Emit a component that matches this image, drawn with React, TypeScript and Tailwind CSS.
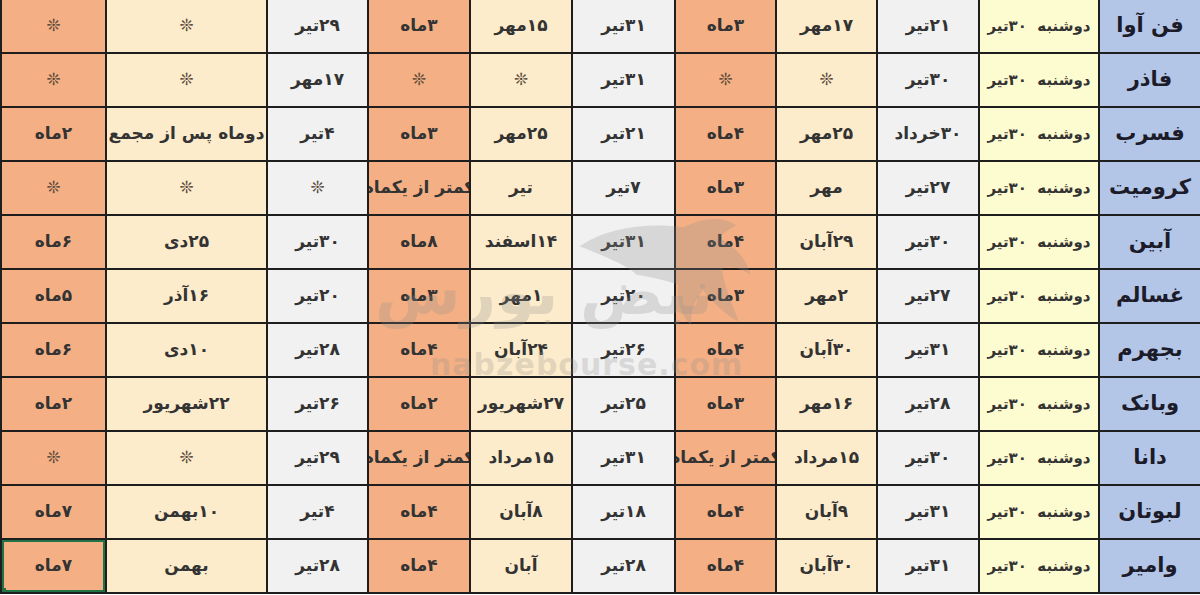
import React from 'react';

const STAR = '❊';
const DATE = 'دوشنبه  ۳۰تیر';

// rows, listed right-to-left as they read
const rows: string[][] = [
  ['فن آوا', DATE, '۲۱تیر', '۱۷مهر', '۳ماه', '۳۱تیر', '۱۵مهر', '۳ماه', '۲۹تیر', STAR, STAR],
  ['فاذر', DATE, '۳۰تیر', STAR, STAR, '۳۱تیر', STAR, STAR, '۱۷مهر', STAR, STAR],
  ['فسرب', DATE, '۳۰خرداد', '۲۵مهر', '۴ماه', '۲۱تیر', '۲۵مهر', '۳ماه', '۴تیر', 'دوماه پس از مجمع', '۲ماه'],
  ['کرومیت', DATE, '۲۷تیر', 'مهر', '۳ماه', '۷تیر', 'تیر', 'کمتر از یکماه', STAR, STAR, STAR],
  ['آبین', DATE, '۳۰تیر', '۲۹آبان', '۴ماه', '۳۱تیر', '۱۴اسفند', '۸ماه', '۳۰تیر', '۲۵دی', '۶ماه'],
  ['غسالم', DATE, '۲۷تیر', '۲مهر', '۳ماه', '۲۰تیر', '۱مهر', '۳ماه', '۲۰تیر', '۱۶آذر', '۵ماه'],
  ['بجهرم', DATE, '۳۱تیر', '۳۰آبان', '۴ماه', '۲۶تیر', '۲۴آبان', '۴ماه', '۲۸تیر', '۱۰دی', '۶ماه'],
  ['وبانک', DATE, '۲۸تیر', '۱۶مهر', '۳ماه', '۲۵تیر', '۲۷شهریور', '۲ماه', '۲۶تیر', '۲۲شهریور', '۲ماه'],
  ['دانا', DATE, '۳۰تیر', '۱۵مرداد', 'کمتر از یکماه', '۳۱تیر', '۱۵مرداد', 'کمتر از یکماه', '۲۹تیر', STAR, STAR],
  ['لبوتان', DATE, '۳۱تیر', '۹آبان', '۴ماه', '۱۸تیر', '۸آبان', '۴ماه', '۴تیر', '۱۰بهمن', '۷ماه'],
  ['وامیر', DATE, '۳۱تیر', '۳۰آبان', '۴ماه', '۲۸تیر', 'آبان', '۴ماه', '۲۸تیر', 'بهمن', '۷ماه'],
];

const colBg = [
  'bg-[#b4c6e7]',
  'bg-[#fdfbd0]',
  'bg-[#f1f1f1]',
  'bg-[#fdeccb]',
  'bg-[#f4b084]',
  'bg-[#f1f1f1]',
  'bg-[#fdeccb]',
  'bg-[#f4b084]',
  'bg-[#f1f1f1]',
  'bg-[#fdeccb]',
  'bg-[#f4b084]',
];

function Cell({ text, col, selected }: { text: string; col: number; selected?: boolean }) {
  const isStar = text === STAR;
  let cls = 'text-[17px] font-bold text-[#333333]';
  if (col === 0) cls = 'text-[21px] font-bold text-[#1b1b2a]';
  else if (col === 1) cls = 'text-[15px] font-bold text-[#333333]';
  else if (isStar) cls = 'text-[17px] text-[#5a4a3a]';
  return (
    <div
      className={`relative h-[54px] border-l-2 border-b-2 border-[#1e1e1e] flex items-center justify-center overflow-hidden whitespace-pre ${colBg[col]}`}
    >
      <span className={cls}>{text}</span>
      {selected && (
        <>
          <div className="absolute inset-0 border-2 border-[#217346]" />
          <div className="absolute -left-[2px] -bottom-[2px] w-[6px] h-[6px] bg-[#217346]" />
        </>
      )}
    </div>
  );
}

function Watermark() {
  return (
    <div className="pointer-events-none absolute left-[370px] top-[200px] w-[400px] h-[190px]">
      {/* bull */}
      <svg className="absolute left-[200px] top-[5px]" width="190" height="130" viewBox="0 0 200 130">
        <path
          d="M10 40 C40 20 80 15 120 20 C140 10 160 8 175 18 C168 22 160 26 158 32 C170 38 185 50 190 70 C178 62 168 60 160 64 C162 80 170 100 178 120 C165 112 150 100 140 86 C132 96 126 108 128 124 C116 112 112 96 114 80 C100 76 84 72 70 70 C60 60 40 52 10 40 Z"
          fill="#8a8a8a"
          opacity="0.25"
        />
      </svg>
      <div
        dir="rtl"
        className="absolute left-[5px] top-[62px] text-[62px] leading-none font-bold text-[#8d8d8d] opacity-25 whitespace-nowrap"
      >
        نبض بورس
      </div>
      <div className="absolute left-[60px] top-[150px] text-[30px] leading-none font-bold tracking-[1px] text-[#8f8f8f] opacity-25">
        nabzebourse.com
      </div>
    </div>
  );
}

export default function App() {
  return (
    <div
      className="relative w-[1200px] h-[595px] overflow-hidden bg-white"
      style={{ fontFamily: '"DejaVu Sans", "Noto Sans", sans-serif' }}
    >
      <div
        dir="rtl"
        className="grid grid-cols-[102px_120px_102px_101px_101px_103px_102px_102px_101px_161px_105px]"
      >
        {rows.map((r, ri) =>
          r.map((t, ci) => (
            <Cell key={`${ri}-${ci}`} text={t} col={ci} selected={ri === rows.length - 1 && ci === 10} />
          ))
        )}
      </div>
      <Watermark />
    </div>
  );
}
